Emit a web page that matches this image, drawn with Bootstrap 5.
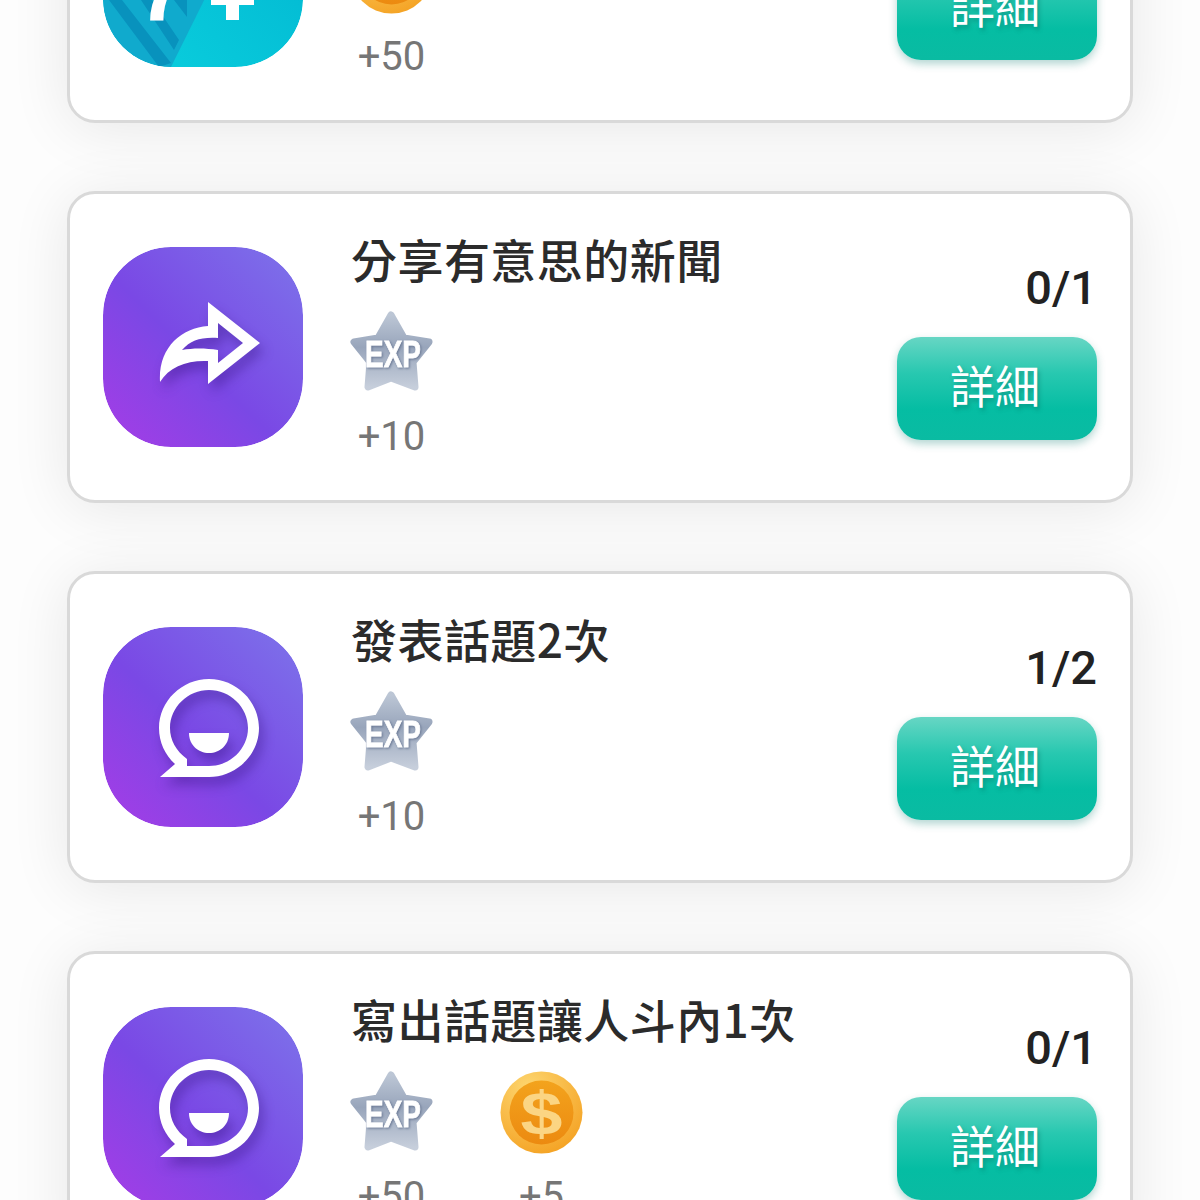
<!DOCTYPE html>
<html lang="zh-Hant">
<head>
  <meta charset="UTF-8" />
  <meta name="viewport" content="width=device-width, initial-scale=1.0" />
  <title>任務</title>
  <link href="https://cdn.jsdelivr.net/npm/bootstrap@5.3.0/dist/css/bootstrap.min.css" rel="stylesheet" />
  <style>
    body {
      background: #fdfdfd;
      font-family: Roboto, "Noto Sans CJK TC", sans-serif;
      overflow: hidden;
      height: 1200px;
    }
    .task-list {
      margin: -189px 67px 0;
      display: flex;
      flex-direction: column;
      gap: 68px;
    }
    .task-card {
      height: 312px;
      padding: 0 33px;
      background: #fff;
      border: 3px solid #d9d9d9;
      border-radius: 28px;
      box-shadow: 0 6px 60px rgba(0, 0, 0, .09);
    }
    .task-icon { width: 200px; height: 200px; border-radius: 68px; }
    .task-body { margin-left: 47px; padding-top: 34px; }
    .task-title {
      font-family: "Noto Sans CJK TC", sans-serif;
      font-size: 46px;
      font-weight: 500;
      letter-spacing: .45px;
      line-height: 60px;
      color: #2b2b2b;
      margin: 0 0 23px 1px;
      white-space: nowrap;
    }
    .reward { width: 83px; }
    .reward-next { margin-left: 67px; }
    .reward svg { width: 83px; height: 83px; display: block; }
    .reward-num {
      font-size: 40px;
      line-height: 44px;
      color: #767676;
      margin-top: 21px;
      text-align: center;
    }
    .task-side { padding-bottom: 60px; }
    .task-count {
      font-size: 47px;
      font-weight: 500;
      line-height: 52px;
      color: #222;
      margin: 0 0 23px 0;
    }
    .btn-detail {
      width: 200px;
      height: 103px;
      padding: 0 4px 8px 0;
      border: 0;
      border-radius: 24px;
      font-family: "Noto Sans CJK TC", sans-serif;
      font-size: 45px;
      color: #fff;
      text-shadow: 2px 3px 4px rgba(0, 90, 80, .35);
      background: linear-gradient(to bottom, #67d6c4 0%, #28c8b0 35%, #05bda3 70%, #0abba2 100%);
      box-shadow: 0 4px 8px rgba(0, 120, 105, .3);
    }
    .btn-detail:hover { color: #fff; }
    .glyph-shadow { filter: drop-shadow(4px 8px 6px rgba(50, 15, 120, .38)); }
    .exp-text {
      font-family: "Liberation Sans", sans-serif;
      font-weight: 700;
      font-size: 37px;
      fill: #fff;
      stroke: #fff;
      stroke-width: .8px;
      filter: drop-shadow(1px 1px 1px rgba(90, 105, 135, .8));
    }
    .coin-text {
      font-family: "Liberation Sans", sans-serif;
      font-weight: 700;
      font-size: 62px;
      fill: #fbd583;
    }
    .num-text {
      font-family: "Liberation Sans", sans-serif;
      font-weight: 700;
      font-size: 92px;
      fill: #fff;
    }
  </style>
</head>
<body>
  <svg class="visually-hidden" aria-hidden="true">
    <defs>
      <linearGradient id="purpleGrad" x1="1" y1="0" x2="0" y2="1">
        <stop offset="0" stop-color="#7d74ea" />
        <stop offset=".55" stop-color="#7a48e5" />
        <stop offset="1" stop-color="#a63ce6" />
      </linearGradient>
      <linearGradient id="starGrad" x1="0" y1="0" x2="0" y2="1">
        <stop offset="0" stop-color="#bcc6d5" />
        <stop offset=".45" stop-color="#98a5bb" />
        <stop offset="1" stop-color="#c6cedb" />
      </linearGradient>
      <radialGradient id="coinEdge" cx=".35" cy=".2" r=".9">
        <stop offset="0" stop-color="#fdd670" />
        <stop offset="1" stop-color="#f4a020" />
      </radialGradient>
      <linearGradient id="coinFace" x1="0" y1="0" x2="0" y2="1">
        <stop offset="0" stop-color="#f3a31d" />
        <stop offset="1" stop-color="#ec8a10" />
      </linearGradient>
    </defs>
    <symbol id="starIcon" viewBox="0 0 83 83">
      <path d="M41 4 L54 27 L79 31 L63 51 L65 76 L41 67 L18 76 L20 51 L4 31 L28 27 Z" fill="url(#starGrad)" stroke="url(#starGrad)" stroke-width="7" stroke-linejoin="round" />
      <text class="exp-text" x="43" y="56" text-anchor="middle" textLength="56" lengthAdjust="spacingAndGlyphs">EXP</text>
    </symbol>
    <symbol id="coinIcon" viewBox="0 0 83 83">
      <circle cx="41.5" cy="41.5" r="41" fill="url(#coinEdge)" />
      <circle cx="41.5" cy="41.5" r="32" fill="url(#coinFace)" />
      <text class="coin-text" x="41.5" y="63" text-anchor="middle" textLength="42" lengthAdjust="spacingAndGlyphs">$</text>
    </symbol>
    <symbol id="shareIcon" viewBox="0 0 200 200">
      <rect width="200" height="200" rx="68" fill="url(#purpleGrad)" />
      <path class="glyph-shadow" fill="#fff" fill-rule="evenodd" d="M157 96 L105 55 V79 C78 81 55 101 57 135 C66 120 84 113 105 114 V137 Z M140 96 L115 76 V91 C98 90 88 93 79 103 C90 101 102 101 115 103 V116 Z" />
    </symbol>
    <symbol id="chatIcon" viewBox="0 0 200 200">
      <rect width="200" height="200" rx="68" fill="url(#purpleGrad)" />
      <g class="glyph-shadow" fill="#fff">
        <path fill-rule="evenodd" d="M57 150 L72 137 C62 128 56 115 56 101 C56 74 79 52 106 52 C133 52 156 74 156 101 C156 128 133 150 106 150 Z M84 139 H106 C127 139 145 122 145 101 C145 80 127 63 106 63 C85 63 67 80 67 101 C67 113 73 124 84 132 Z" />
        <path d="M86 106 H126 C126 118 117 126 106 126 C95 126 86 118 86 106 Z" />
      </g>
    </symbol>
  </svg>

  <main class="task-list">
    <section class="task-card d-flex align-items-stretch">
      <svg class="task-icon align-self-center flex-shrink-0" viewBox="0 0 200 200">
        <defs>
          <clipPath id="tealClip"><rect width="200" height="200" rx="68" /></clipPath>
          <linearGradient id="tealGrad" x1="0" y1="1" x2="1" y2="0">
            <stop offset="0" stop-color="#0bd0de" />
            <stop offset="1" stop-color="#00b4d0" />
          </linearGradient>
        </defs>
        <g clip-path="url(#tealClip)">
          <rect width="200" height="200" fill="url(#tealGrad)" />
          <path d="M0 0 H125 V85 L68 200 H0 Z" fill="#10aacd" />
          <path d="M6 133 H19 L68 196 L56 200 Z M38 133 H49 L76 173 L71 183 Z M71 133 H84 L84 150 Z" fill="#0892bd" />
          <text class="num-text" x="34" y="153">7</text>
          <path d="M123 125 H108 V138 H123 V153 H136 V138 H151 V125 H136 V100 H123 Z" fill="#fff" />
        </g>
      </svg>
      <div class="task-body">
        <h2 class="task-title">&nbsp;</h2>
        <div class="d-flex">
          <div class="reward">
            <svg viewBox="0 0 83 83"><use href="#coinIcon" /></svg>
            <div class="reward-num">+50</div>
          </div>
        </div>
      </div>
      <div class="task-side ms-auto d-flex flex-column justify-content-end align-items-end">
        <button type="button" class="btn btn-detail">詳細</button>
      </div>
    </section>

    <section class="task-card d-flex align-items-stretch">
      <svg class="task-icon align-self-center flex-shrink-0" viewBox="0 0 200 200"><use href="#shareIcon" /></svg>
      <div class="task-body">
        <h2 class="task-title">分享有意思的新聞</h2>
        <div class="d-flex">
          <div class="reward">
            <svg viewBox="0 0 83 83"><use href="#starIcon" /></svg>
            <div class="reward-num">+10</div>
          </div>
        </div>
      </div>
      <div class="task-side ms-auto d-flex flex-column justify-content-end align-items-end">
        <div class="task-count">0/1</div>
        <button type="button" class="btn btn-detail">詳細</button>
      </div>
    </section>

    <section class="task-card d-flex align-items-stretch">
      <svg class="task-icon align-self-center flex-shrink-0" viewBox="0 0 200 200"><use href="#chatIcon" /></svg>
      <div class="task-body">
        <h2 class="task-title">發表話題2次</h2>
        <div class="d-flex">
          <div class="reward">
            <svg viewBox="0 0 83 83"><use href="#starIcon" /></svg>
            <div class="reward-num">+10</div>
          </div>
        </div>
      </div>
      <div class="task-side ms-auto d-flex flex-column justify-content-end align-items-end">
        <div class="task-count">1/2</div>
        <button type="button" class="btn btn-detail">詳細</button>
      </div>
    </section>

    <section class="task-card d-flex align-items-stretch">
      <svg class="task-icon align-self-center flex-shrink-0" viewBox="0 0 200 200"><use href="#chatIcon" /></svg>
      <div class="task-body">
        <h2 class="task-title">寫出話題讓人斗內1次</h2>
        <div class="d-flex">
          <div class="reward">
            <svg viewBox="0 0 83 83"><use href="#starIcon" /></svg>
            <div class="reward-num">+50</div>
          </div>
          <div class="reward reward-next">
            <svg viewBox="0 0 83 83"><use href="#coinIcon" /></svg>
            <div class="reward-num">+5</div>
          </div>
        </div>
      </div>
      <div class="task-side ms-auto d-flex flex-column justify-content-end align-items-end">
        <div class="task-count">0/1</div>
        <button type="button" class="btn btn-detail">詳細</button>
      </div>
    </section>
  </main>

  <script src="https://cdn.jsdelivr.net/npm/bootstrap@5.3.0/dist/js/bootstrap.bundle.min.js"></script>
</body>
</html>
